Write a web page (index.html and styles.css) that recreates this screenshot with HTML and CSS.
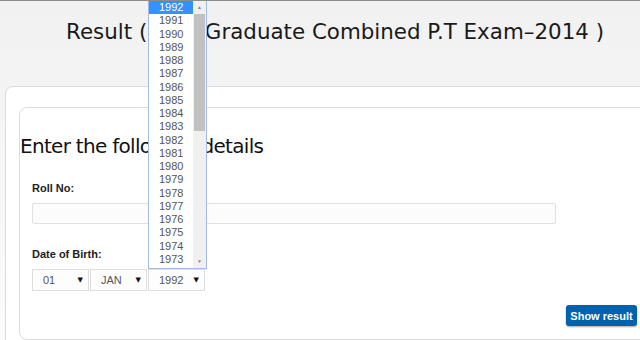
FILE: index.html
```html
<!DOCTYPE html>
<html lang="en">
<head>
    <meta charset="UTF-8">
    <meta name="viewport" content="width=device-width, initial-scale=1.0">
    <title>Result - Under Graduate Combined P.T Exam-2014</title>
    <link rel="stylesheet" href="styles.css">
</head>
<body>
    <div class="page">
        <header class="page-header">
            <h1>Result ( <span class="title-gap">Under</span> Graduate Combined P.T Exam&ndash;2014 )</h1>
        </header>

        <div class="outer-panel">
            <div class="inner-panel">
                <h2>Enter the following details</h2>

                <form class="result-form">
                    <label class="field-label">Roll No:</label>
                    <input type="text" class="text-input">

                    <label class="field-label dob-label">Date of Birth:</label>
                    <div class="dob-row">
                        <div class="fake-select"><span>01</span><span class="arrow">&#9660;</span></div>
                        <div class="fake-select"><span>JAN</span><span class="arrow">&#9660;</span></div>
                        <div class="fake-select"><span>1992</span><span class="arrow">&#9660;</span></div>
                    </div>

                    <div class="actions">
                        <button type="button" class="btn-show">Show result</button>
                    </div>
                </form>
            </div>
        </div>

        <!-- Open year dropdown -->
        <div class="year-list">
            <ul class="year-options">
                <li class="selected">1992</li>
                <li>1991</li>
                <li>1990</li>
                <li>1989</li>
                <li>1988</li>
                <li>1987</li>
                <li>1986</li>
                <li>1985</li>
                <li>1984</li>
                <li>1983</li>
                <li>1982</li>
                <li>1981</li>
                <li>1980</li>
                <li>1979</li>
                <li>1978</li>
                <li>1977</li>
                <li>1976</li>
                <li>1975</li>
                <li>1974</li>
                <li>1973</li>
            </ul>
            <div class="scrollbar">
                <div class="scroll-btn">&#9650;</div>
                <div class="scroll-track">
                    <div class="scroll-thumb"></div>
                </div>
                <div class="scroll-btn">&#9660;</div>
            </div>
        </div>
    </div>
</body>
</html>
```

FILE: styles.css
```css
/* General Styles */
* {
    margin: 0;
    padding: 0;
    box-sizing: border-box;
}

html, body {
    width: 640px;
    height: 340px;
    overflow: hidden;
}

body {
    background: linear-gradient(#f1f1f1, #f7f7f7 60%, #fbfbfb);
    border-top: 1px solid #8c8c8c;
    font-family: 'Liberation Sans', Arial, sans-serif;
}

.page {
    position: relative;
    width: 720px;
}

.page-header {
    height: 85px;
    padding: 18px 0 0 30px;
    width: 640px;
    text-align: center;
}

.page-header h1 {
    font-family: 'DejaVu Sans', sans-serif;
    font-weight: normal;
    font-size: 21.4px;
    color: #1a1a1a;
    white-space: nowrap;
}

.title-gap {
    display: inline-block;
    width: 44px;
    overflow: hidden;
    vertical-align: bottom;
}

/* Panels */
.outer-panel {
    width: 710px;
    margin-left: 5px;
    background: #fff;
    border: 1px solid #dcdcdc;
    border-radius: 8px;
    padding: 20px 0 0 13px;
    height: 300px;
}

.inner-panel {
    width: 680px;
    border: 1px solid #dcdcdc;
    border-radius: 8px;
    height: 233px;
}

.inner-panel h2 {
    font-family: 'DejaVu Sans', sans-serif;
    font-weight: normal;
    font-size: 20px;
    letter-spacing: -0.7px;
    color: #111;
    margin-top: 26px;
}

/* Form */
.result-form {
    display: flex;
    flex-direction: column;
    align-items: flex-start;
    padding-left: 12px;
}

.field-label {
    font-size: 11px;
    font-weight: bold;
    color: #222;
    margin-top: 24px;
    margin-bottom: 9px;
}

.dob-label {
    margin-top: 24px;
}

.text-input {
    width: 524px;
    height: 21px;
    border: 1px solid #e0e0e0;
    border-radius: 2px;
    background: #fcfcfc;
}

.dob-row {
    display: flex;
    gap: 1px;
}

.fake-select {
    display: flex;
    justify-content: space-between;
    align-items: center;
    width: 57px;
    height: 22px;
    padding: 0 5px 0 10px;
    border: 1px solid #dedede;
    background: #fdfdfd;
    font-size: 11px;
    color: #555;
}

.fake-select .arrow {
    font-family: 'DejaVu Sans', sans-serif;
    font-size: 7px;
    color: #111;
}

.actions {
    width: 605px;
    display: flex;
    justify-content: flex-end;
    margin-top: 14px;
}

.btn-show {
    width: 71px;
    height: 21px;
    border: none;
    border-radius: 3px;
    background: #0062ad;
    color: #fff;
    font-family: 'Liberation Sans', Arial, sans-serif;
    font-size: 11px;
    font-weight: bold;
    box-shadow: 0 1px 2px rgba(0, 0, 0, 0.35);
}

/* Open year dropdown */
.year-list {
    position: absolute;
    left: 148px;
    top: -1px;
    width: 59px;
    height: 269px;
    display: flex;
    background: #fff;
    border: 1px solid #a3bbe3;
}

.year-options {
    list-style: none;
    flex: 1;
    font-size: 11px;
    color: #555;
}

.year-options li {
    height: 13.26px;
    line-height: 13px;
    padding-left: 10px;
}

.year-options li.selected {
    background: #3392fd;
    color: #fff;
}

.scrollbar {
    width: 13px;
    display: flex;
    flex-direction: column;
    background: #f0f0f0;
}

.scroll-btn {
    height: 13px;
    font-size: 5px;
    color: #888;
    text-align: center;
    line-height: 13px;
}

.scroll-track {
    flex: 1;
}

.scroll-thumb {
    height: 117px;
    margin: 0 1px;
    background: #c1c1c1;
}
```
